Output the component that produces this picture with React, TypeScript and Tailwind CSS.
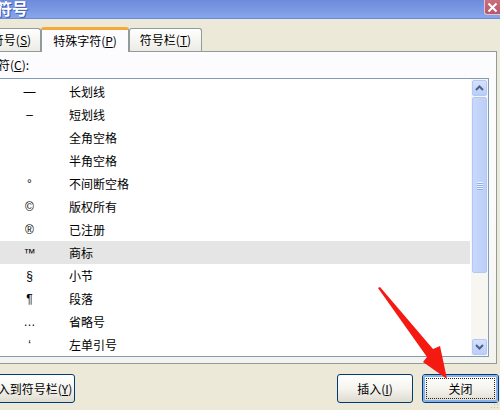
import React from "react";

const rows: [string, string][] = [
  ["—", "长划线"],
  ["–", "短划线"],
  ["", "全角空格"],
  ["", "半角空格"],
  ["°", "不间断空格"],
  ["©", "版权所有"],
  ["®", "已注册"],
  ["™", "商标"],
  ["§", "小节"],
  ["¶", "段落"],
  ["…", "省略号"],
  ["‘", "左单引号"],
  ["’", "右单引号"],
];

function Tab({ label, hot, active = false, className = "" }: { label: string; hot: string; active?: boolean; className?: string }) {
  return (
    <div
      className={`flex items-center justify-center border border-b-0 border-[#919b9c] rounded-t-[3px] text-[12px] text-black ${
        active
          ? "relative z-10 h-[25px] mb-[-1px] bg-[#fcfcfe] border-t-[3px] border-t-[#f4a93a]"
          : "h-[23px] bg-gradient-to-b from-white to-[#ecebe5]"
      } ${className}`}
    >
      {label}(<span className="underline">{hot}</span>)
    </div>
  );
}

function XpButton({ children, className = "", focused = false }: { children: React.ReactNode; className?: string; focused?: boolean }) {
  return (
    <div
      className={`h-[29px] rounded-[3px] border border-[#003c74] bg-gradient-to-b from-white via-[#f5f4ef] to-[#dedbd0] flex items-center justify-center text-[12px] text-black ${className}`}
    >
      {focused ? (
        <div className="w-full h-full rounded-[2px] border-2 border-[#8ab0ea] p-[1px]">
          <div className="w-full h-full border border-dotted border-[#222] flex items-center justify-center">{children}</div>
        </div>
      ) : (
        children
      )}
    </div>
  );
}

function ScrollBtn({ up }: { up: boolean }) {
  return (
    <div className="h-[16px] mx-[1px] rounded-[2px] border border-[#b4c8f6] bg-gradient-to-b from-[#d6e2fd] to-[#b9cdfa] flex items-center justify-center">
      <svg width="9" height="6" viewBox="0 0 9 6">
        <path d={up ? "M1 5 L4.5 1.5 L8 5" : "M1 1 L4.5 4.5 L8 1"} fill="none" stroke="#4d6185" strokeWidth="2" />
      </svg>
    </div>
  );
}

export default function App() {
  return (
    <div className="relative w-[500px] h-[410px] overflow-hidden bg-[#ece9d8] font-['Noto_Sans_CJK_SC','Liberation_Sans',sans-serif]">
      {/* Title bar */}
      <div className="h-[19px] flex justify-between bg-gradient-to-b from-[#6d8bdb] via-[#7997e2] to-[#86a6ec] border-b border-[#6b89d9]">
        <span className="ml-[-4px] mt-[-1px] text-[16px] font-bold leading-[19px] text-white [text-shadow:1px_1px_0_#3d5cb8]">符号</span>
        <div className="w-[16px] h-[15px] rounded-bl-[3px] border-l border-b border-[#e5c3c9] bg-gradient-to-b from-[#c96e7d] to-[#b5586b] flex items-center justify-center">
          <svg width="11" height="11" viewBox="0 0 11 11">
            <path d="M1.5 1.5 L9.5 9.5 M9.5 1.5 L1.5 9.5" stroke="white" strokeWidth="2" />
          </svg>
        </div>
      </div>

      {/* Tabs */}
      <div className="h-[32px] flex items-end ml-[-18px]">
        <Tab label="符号" hot="S" className="w-[59px]" />
        <Tab label="特殊字符" hot="P" active className="w-[88px]" />
        <Tab label="符号栏" hot="T" className="w-[73px]" />
      </div>

      {/* Tab panel */}
      <div className="ml-[-22px] mr-[3px] h-[313px] border border-[#919b9c] bg-gradient-to-b from-[#fcfcfe] via-[#fbfbfb] to-[#f4f3ee] pl-[7px] pr-[7px] flex flex-col">
        <div className="h-[26px] flex items-center text-[12px] text-black">
          字符(<span className="underline">C</span>):
        </div>
        <div className="h-[279px] border border-[#7f9db9] bg-white flex overflow-hidden">
          <div className="flex-1 pt-[1px] overflow-hidden">
            {rows.map(([sym, name], i) => (
              <div key={name} className={`h-[23px] flex items-center text-[12px] text-black ${i === 7 ? "bg-[#e5e5e5] mr-[1px]" : ""}`}>
                <span className="w-[82px] pl-[3px] text-center font-['Liberation_Sans',sans-serif] text-[12px]">{sym}</span>
                <span>{name}</span>
              </div>
            ))}
          </div>
          <div className="w-[17px] bg-[#f7f6f1] flex flex-col py-[1px] gap-[1px]">
            <ScrollBtn up />
            <div className="h-[176px] mx-[1px] rounded-[2px] border border-[#b4c8f6] bg-gradient-to-r from-[#c9d8fc] to-[#bccffa] flex items-center justify-center">
              <div className="flex flex-col gap-[1px]">
                {[0, 1, 2, 3].map((k) => (
                  <div key={k} className="w-[6px] h-[1px] bg-[#eef3fe] shadow-[0_1px_0_#8caef0]" />
                ))}
              </div>
            </div>
            <div className="flex-1" />
            <ScrollBtn up={false} />
          </div>
        </div>
      </div>

      {/* Buttons */}
      <div className="mt-[10px] flex items-center">
        <XpButton className="ml-[-17px] w-[92px]">
          插入到符号栏(<span className="underline">Y</span>)
        </XpButton>
        <div className="flex-1" />
        <XpButton className="w-[76px]">
          插入(<span className="underline">I</span>)
        </XpButton>
        <XpButton focused className="ml-[9px] mr-[1px] w-[77px]">
          关闭
        </XpButton>
      </div>

      {/* Red arrow */}
      <svg className="absolute left-0 top-0 pointer-events-none" width="500" height="410">
        <polygon points="378,288 380,287 433,349 440,346 447,379 423,362 427,357" fill="#f41a12" />
      </svg>

      {/* Resize grip */}
      <svg className="absolute right-[1px] bottom-[1px]" width="10" height="10" viewBox="0 0 10 10">
        <rect x="8" y="2" width="1" height="1" fill="#c4c1b3" />
        <rect x="5" y="5" width="1" height="1" fill="#c4c1b3" />
        <rect x="8" y="5" width="1" height="1" fill="#c4c1b3" />
        <rect x="2" y="8" width="1" height="1" fill="#c4c1b3" />
        <rect x="5" y="8" width="1" height="1" fill="#c4c1b3" />
        <rect x="8" y="8" width="1" height="1" fill="#c4c1b3" />
      </svg>
    </div>
  );
}
